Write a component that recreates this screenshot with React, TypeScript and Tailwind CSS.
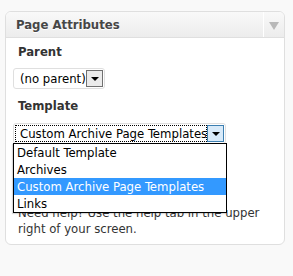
import React from 'react';

const sans = "font-['DejaVu_Sans_Condensed','Liberation_Sans',sans-serif]";

const TEMPLATES = ['Default Template', 'Archives', 'Custom Archive Page Templates', 'Links'];

/** Old-style native select: white rounded box, value text and a little square arrow button. */
function FakeSelect({
  value,
  width,
  focused = false,
  children,
}: {
  value: string;
  width: string;
  focused?: boolean;
  children?: React.ReactNode;
}) {
  return (
    <div className={`relative flex h-[21px] ${width} items-center rounded-[3px] border border-[#dfdfdf] bg-white px-[1px]`}>
      <div
        className={`flex h-[17px] min-w-0 flex-1 items-center overflow-hidden whitespace-nowrap text-[13px] text-black ${
          focused ? 'border border-dotted border-black pl-[4px]' : 'pl-[5px]'
        }`}
      >
        {value}
      </div>
      <div
        className={`flex h-[17px] w-[17px] shrink-0 items-center justify-center border ${
          focused ? 'border-[#3c7fb1] bg-[#d8eaf9]' : 'border-[#707070] bg-[#ebebeb]'
        }`}
      >
        <span className="mt-[1px] h-0 w-0 border-t-[4px] border-r-[4px] border-l-[4px] border-t-black border-r-transparent border-l-transparent" />
      </div>
      {children}
    </div>
  );
}

export default function App() {
  return (
    <div className={`h-[276px] w-[293px] bg-[#f9f9f9] pt-[11px] pl-[5px] ${sans}`}>
      <div className="relative h-[234px] w-[280px] rounded-[6px] border border-[#dfdfdf] bg-white">
        <div className="flex h-[26px] rounded-t-[5px] border-b border-[#dfdfdf] bg-gradient-to-b from-[#f9f9f9] to-[#ececec]">
          <h3 className="flex-1 pt-[5px] pl-[10px] text-[13px] leading-[16px] font-bold text-[#464646] [text-shadow:0_1px_0_#fff]">
            Page Attributes
          </h3>
          <div className="flex w-[21px] items-center justify-center border-l border-white pt-[2px]">
            <span className="h-0 w-0 border-t-[8px] border-r-[5px] border-l-[5px] border-t-[#b8b8b8] border-r-transparent border-l-transparent" />
          </div>
        </div>

        <div className="px-[7px] text-[13px] leading-[16px] text-[#333]">
          <p className="mt-[6px] pl-[5px] font-bold">Parent</p>
          <div className="mt-[8px]">
            <FakeSelect value="(no parent)" width="w-[92px]" />
          </div>

          <p className="mt-[9px] pl-[5px] font-bold">Template</p>
          <div className="mt-[9px]">
            <FakeSelect value="Custom Archive Page Templates" width="w-[213px]" focused>
              <ul className="absolute top-full left-[-1px] z-10 w-[214px] border border-black bg-white shadow-[-1px_1px_1px_rgba(0,0,0,0.15)]">
                {TEMPLATES.map((t) => (
                  <li
                    key={t}
                    className={`h-[17px] pl-[3px] text-[13px] leading-[17px] whitespace-nowrap ${
                      t === 'Custom Archive Page Templates' ? 'bg-[#3399ff] text-white' : 'text-black'
                    }`}
                  >
                    {t}
                  </li>
                ))}
              </ul>
            </FakeSelect>
          </div>

          {/* the open list hangs over the top of this paragraph */}
          <p className="mt-[61px] pl-[5px]">
            Need help? Use the help tab in the upper right of your screen.
          </p>
        </div>
      </div>
    </div>
  );
}
